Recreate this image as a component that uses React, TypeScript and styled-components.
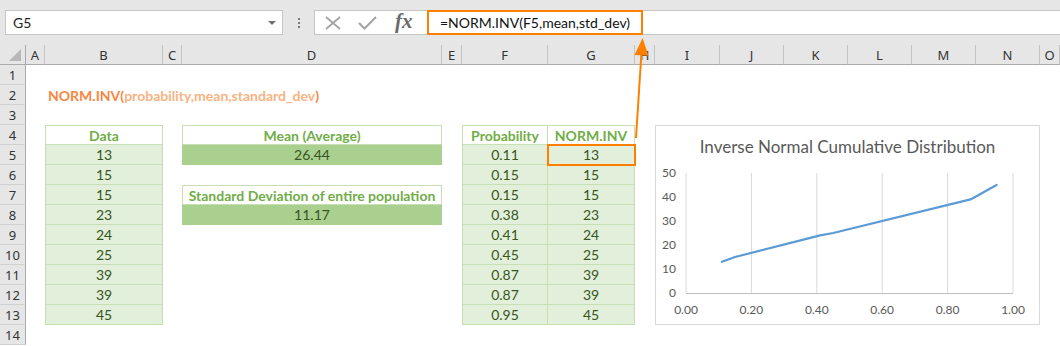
import React from "react";
import styled, { createGlobalStyle, css } from "styled-components";

const GlobalStyle = createGlobalStyle`
  html, body { margin: 0; padding: 0; background: #ffffff; }
  body { font-family: Lato, "Liberation Sans", sans-serif; }
  #root { width: 1060px; height: 346px; overflow: hidden; }
`;

const COLS = ["A", "B", "C", "D", "E", "F", "G", "H", "I", "J", "K", "L", "M", "N", "O"];
const WIDTHS = [19, 118, 19, 260, 20, 86, 87, 20, 65, 64, 64, 64, 64, 64, 20];
const ROWS = Array.from({ length: 14 }, (_, i) => i + 1);

type Kind = "title" | "head" | "data" | "dark";
type Spec = { text: React.ReactNode; kind: Kind; top?: boolean; left?: boolean; hl?: boolean };

const data = [13, 15, 15, 23, 24, 25, 39, 39, 45];
const probs = [0.11, 0.15, 0.15, 0.38, 0.41, 0.45, 0.87, 0.87, 0.95];

const Page = styled.div`
  position: relative;
  width: 1060px;
  height: 346px;
  background: #ffffff;
`;

const TopBar = styled.div`
  display: flex;
  align-items: flex-start;
  height: 45px;
  box-sizing: border-box;
  padding: 10px 0 0 5px;
  background: #e6e6e6;
`;

const NameBox = styled.div`
  box-sizing: border-box;
  width: 278px;
  height: 25px;
  display: flex;
  align-items: center;
  justify-content: space-between;
  padding: 0 6px 0 7px;
  background: #ffffff;
  border: 1px solid #c6c6c6;
  font-size: 14px;
  color: #222;
`;

const DropArrow = styled.span`
  width: 0;
  height: 0;
  border-left: 4px solid transparent;
  border-right: 4px solid transparent;
  border-top: 4px solid #707070;
`;

const Dots = styled.div`
  width: 31px;
  height: 25px;
  display: flex;
  flex-direction: column;
  align-items: center;
  justify-content: center;
  gap: 2px;
  span {
    width: 2px;
    height: 2px;
    background: #7a7a7a;
  }
`;

const FormulaArea = styled.div`
  flex: 1;
  display: flex;
  height: 25px;
`;

const IconBox = styled.div`
  box-sizing: border-box;
  width: 113px;
  height: 25px;
  display: flex;
  align-items: center;
  padding-left: 10px;
  gap: 17px;
  background: #ffffff;
  border: 1px solid #c6c6c6;
  border-right: none;
`;

const Fx = styled.span`
  font-family: "Liberation Serif", serif;
  font-style: italic;
  font-weight: bold;
  font-size: 21px;
  color: #6a6a6a;
  margin-left: 1px;
  margin-top: -2px;
`;

const FormulaInput = styled.div`
  box-sizing: border-box;
  width: 216px;
  height: 25px;
  display: flex;
  align-items: center;
  padding-left: 11px;
  background: #ffffff;
  border: 2px solid #ff8000;
  font-size: 14px;
  color: #111;
`;

const FormulaRest = styled.div`
  flex: 1;
  box-sizing: border-box;
  height: 25px;
  background: #ffffff;
  border-top: 1px solid #c6c6c6;
  border-bottom: 1px solid #c6c6c6;
`;

const Sheet = styled.div`
  display: grid;
  grid-template-columns: 26px ${WIDTHS.map((w) => `${w}px`).join(" ")};
  grid-template-rows: repeat(15, 20px);
  background: #ffffff;
`;

const Corner = styled.div`
  position: relative;
  box-sizing: border-box;
  background: #e6e6e6;
  border-right: 1px solid #ababab;
  border-bottom: 1px solid #ababab;
  &::after {
    content: "";
    position: absolute;
    right: 4px;
    bottom: 3px;
    width: 0;
    height: 0;
    border-left: 12px solid transparent;
    border-bottom: 12px solid #b8b8b8;
  }
`;

const ColHead = styled.div`
  box-sizing: border-box;
  display: flex;
  align-items: center;
  justify-content: center;
  background: #e6e6e6;
  border-right: 1px solid #c4c4c4;
  border-bottom: 1px solid #ababab;
  font-family: "Noto Sans", "DejaVu Sans", sans-serif;
  font-size: 13px;
  color: #333;
  overflow: hidden;
`;

const RowHead = styled.div`
  box-sizing: border-box;
  display: flex;
  align-items: center;
  justify-content: center;
  background: #e6e6e6;
  border-right: 1px solid #ababab;
  border-bottom: 1px solid #d0d0d0;
  font-family: "Noto Sans", "DejaVu Sans", sans-serif;
  font-size: 13px;
  color: #333;
`;

const Cell = styled.div<{ $kind?: Kind; $top?: boolean; $left?: boolean; $hl?: boolean }>`
  position: relative;
  box-sizing: border-box;
  display: flex;
  align-items: center;
  justify-content: center;
  white-space: nowrap;
  font-size: 14px;
  ${({ $kind }) =>
    $kind === "title" &&
    css`
      justify-content: flex-start;
      padding-left: 3px;
      font-weight: bold;
      color: #f7863e;
      z-index: 1;
    `}
  ${({ $kind }) =>
    ($kind === "head" || $kind === "data" || $kind === "dark") &&
    css`
      border-right: 1px solid #c6e0b4;
      border-bottom: 1px solid #c6e0b4;
    `}
  ${({ $kind }) =>
    $kind === "head" &&
    css`
      background: #ffffff;
      font-weight: bold;
      color: #70ad47;
    `}
  ${({ $kind }) =>
    $kind === "data" &&
    css`
      background: #e2efda;
      color: #375623;
    `}
  ${({ $kind }) =>
    $kind === "dark" &&
    css`
      background: #a9d08e;
      border-color: #a9d08e;
      color: #375623;
    `}
  ${({ $top }) => $top && css`border-top: 1px solid #c6e0b4;`}
  ${({ $left, $kind }) =>
    $left && css`border-left: 1px solid ${$kind === "dark" ? "#a9d08e" : "#c6e0b4"};`}
  ${({ $hl }) =>
    $hl &&
    css`
      outline: 2px solid #ff8000;
      outline-offset: -1px;
      z-index: 2;
    `}
`;

const Light = styled.span`
  font-weight: bold;
  color: #f9b382;
`;

const Chart = styled.div`
  grid-column: 10 / 16;
  grid-row: 5 / 15;
  box-sizing: border-box;
  display: flex;
  flex-direction: column;
  background: #ffffff;
  border: 1px solid #d9d9d9;
`;

const ChartTitle = styled.div`
  height: 40px;
  line-height: 42px;
  text-align: center;
  font-size: 17px;
  color: #595959;
`;

const Overlay = styled.svg`
  position: absolute;
  left: 0;
  top: 0;
  pointer-events: none;
  z-index: 5;
`;

const specs: Record<string, Spec> = {
  B2: {
    kind: "title",
    text: (
      <>
        NORM.INV(<Light>probability,mean,standard_dev</Light>)
      </>
    ),
  },
  B4: { kind: "head", text: "Data", top: true, left: true },
  D4: { kind: "head", text: "Mean (Average)", top: true, left: true },
  D5: { kind: "dark", text: "26.44", left: true },
  D7: { kind: "head", text: "Standard Deviation of entire population", top: true, left: true },
  D8: { kind: "dark", text: "11.17", left: true },
  F4: { kind: "head", text: "Probability", top: true, left: true },
  G4: { kind: "head", text: "NORM.INV", top: true },
};
data.forEach((v, i) => {
  specs[`B${i + 5}`] = { kind: "data", text: String(v), left: true };
  specs[`F${i + 5}`] = { kind: "data", text: probs[i].toFixed(2), left: true };
  specs[`G${i + 5}`] = { kind: "data", text: String(v), hl: i === 0 };
});

const px = (p: number) => 30 + p * 327;
const py = (v: number) => 127 - v * 2.4;

function ChartPlot() {
  const pts = probs.map((p, i) => `${px(p).toFixed(1)},${py(data[i]).toFixed(1)}`).join(" ");
  return (
    <svg width="383" height="158" viewBox="0 0 383 158">
      {[0, 0.2, 0.4, 0.6, 0.8, 1].map((p) => (
        <line key={p} x1={px(p)} x2={px(p)} y1={py(50)} y2={py(0)} stroke="#d9d9d9" strokeWidth="1" />
      ))}
      <line x1={px(0)} x2={px(1)} y1={py(0) + 0.5} y2={py(0) + 0.5} stroke="#bfbfbf" strokeWidth="1" />
      {[0, 10, 20, 30, 40, 50].map((v) => (
        <text key={v} x={20} y={py(v) + 4} textAnchor="end" fontSize="12" fill="#595959" fontFamily="Lato, sans-serif">
          {v}
        </text>
      ))}
      {[0, 0.2, 0.4, 0.6, 0.8, 1].map((p) => (
        <text key={p} x={px(p)} y={147.5} textAnchor="middle" fontSize="12" fill="#595959" fontFamily="Lato, sans-serif">
          {p.toFixed(2)}
        </text>
      ))}
      <polyline points={pts} fill="none" stroke="#5b9bd5" strokeWidth="2.25" strokeLinejoin="round" strokeLinecap="round" />
    </svg>
  );
}

export default function App() {
  const cells: React.ReactNode[] = [];
  cells.push(<Corner key="corner" />);
  COLS.forEach((c) => cells.push(<ColHead key={`h${c}`}>{c}</ColHead>));
  ROWS.forEach((r) => {
    cells.push(<RowHead key={`r${r}`}>{r}</RowHead>);
    COLS.forEach((c, ci) => {
      if (r >= 4 && r <= 13 && ci >= 8 && ci <= 13) return;
      const s = specs[`${c}${r}`];
      cells.push(
        <Cell key={`${c}${r}`} $kind={s?.kind} $top={s?.top} $left={s?.left} $hl={s?.hl}>
          {s?.text}
        </Cell>
      );
    });
  });

  return (
    <Page>
      <GlobalStyle />
      <TopBar>
        <NameBox>
          <span>G5</span>
          <DropArrow />
        </NameBox>
        <Dots>
          <span />
          <span />
          <span />
        </Dots>
        <FormulaArea>
          <IconBox>
            <svg width="16" height="14" viewBox="0 0 16 14">
              <path d="M1 1 L15 13 M15 1 L1 13" stroke="#a3a3a3" strokeWidth="1.8" fill="none" />
            </svg>
            <svg width="19" height="14" viewBox="0 0 19 14">
              <path d="M1 7 L6.5 12.5 L18 1" stroke="#a3a3a3" strokeWidth="2" fill="none" />
            </svg>
            <Fx>fx</Fx>
          </IconBox>
          <FormulaInput>=NORM.INV(F5,mean,std_dev)</FormulaInput>
          <FormulaRest />
        </FormulaArea>
      </TopBar>
      <Sheet>
        {cells}
        <Chart>
          <ChartTitle>Inverse Normal Cumulative Distribution</ChartTitle>
          <ChartPlot />
        </Chart>
      </Sheet>
      <Overlay width="1060" height="346" viewBox="0 0 1060 346">
        <line x1="636" y1="138" x2="641.5" y2="52" stroke="#ff8000" strokeWidth="2" />
        <polygon points="642.6,38 634.5,55 648.5,55.8" fill="#ff8000" />
      </Overlay>
    </Page>
  );
}
